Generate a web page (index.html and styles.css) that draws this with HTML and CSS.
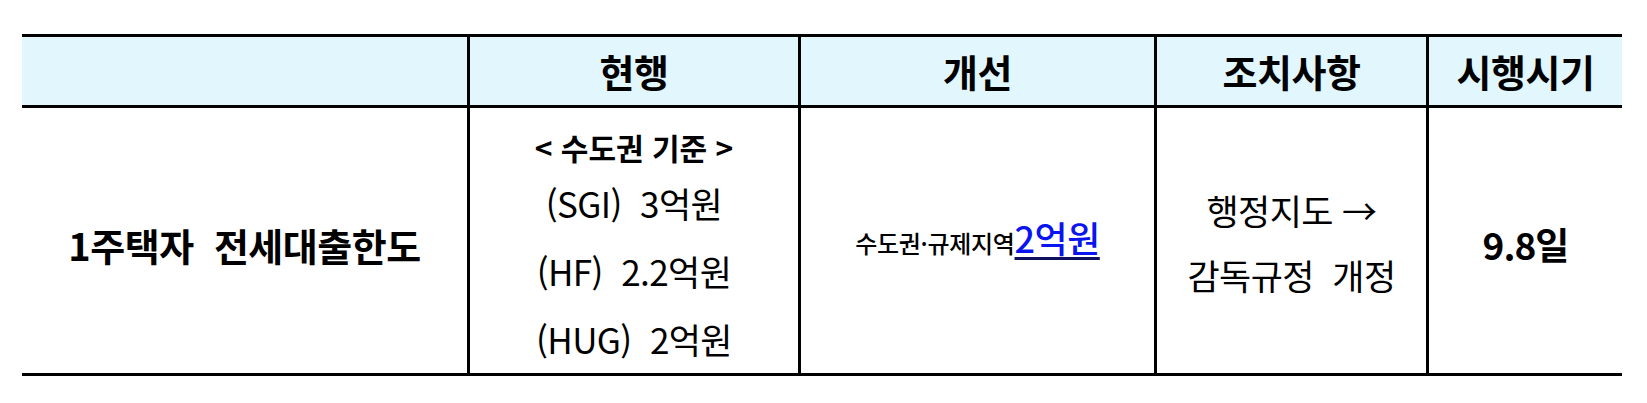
FILE: index.html
```html
<!DOCTYPE html>
<html lang="ko">
<head>
<meta charset="utf-8">
<title>1주택자 전세대출한도</title>
<link rel="stylesheet" href="styles.css">
</head>
<body>
<div class="table">
  <div class="row head">
    <div class="cell c1"></div>
    <div class="cell c2">현행</div>
    <div class="cell c3">개선</div>
    <div class="cell c4">조치사항</div>
    <div class="cell c5">시행시기</div>
  </div>
  <div class="row body">
    <div class="cell c1 item">1주택자&nbsp; 전세대출한도</div>
    <div class="cell c2 current">
      <div class="basis">&lt; 수도권 기준 &gt;</div>
      <div class="line">(SGI)&nbsp; 3억원</div>
      <div class="line">(HF)&nbsp; 2.2억원</div>
      <div class="line">(HUG)&nbsp; 2억원</div>
    </div>
    <div class="cell c3 improve">
      <div class="improve-text"><span class="region">수도권·규제지역</span><span class="amount">2억원</span></div>
    </div>
    <div class="cell c4 action">
      <div class="aline">행정지도 →</div>
      <div class="aline">감독규정&nbsp; 개정</div>
    </div>
    <div class="cell c5 date">9.8일</div>
  </div>
</div>
</body>
</html>
```

FILE: styles.css
```css
html, body {
  margin: 0;
  padding: 0;
  background: #ffffff;
}

body {
  font-family: "Noto Sans CJK KR", "Noto Sans", sans-serif;
  color: #000000;
}

.table {
  margin: 34px 0 0 22px;
  width: 1600px;
  border-top: 3px solid #000;
  border-bottom: 3px solid #000;
}

.row {
  display: grid;
  grid-template-columns: 445px 331px 356px 272px 196px;
}

.head {
  height: 68px;
  background: #e1f6fd;
  border-bottom: 3px solid #000;
}

.body {
  height: 265px;
}

.cell {
  display: flex;
  flex-direction: column;
  align-items: center;
  justify-content: center;
  box-sizing: border-box;
  border-left: 3px solid #000;
  text-align: center;
  white-space: nowrap;
}

.cell.c1 {
  border-left: none;
}

.head .cell {
  font-size: 38px;
  font-weight: 700;
  line-height: 68px;
  letter-spacing: -0.5px;
}

.item {
  font-size: 38px;
  font-weight: 700;
  letter-spacing: -0.5px;
  line-height: 44px;
  padding-top: 8px;
}

.current {
  justify-content: flex-start;
  padding-top: 17px;
}

.basis {
  font-size: 30px;
  font-weight: 700;
  line-height: 44px;
  letter-spacing: 0;
}

.line {
  font-size: 35px;
  font-weight: 400;
  line-height: 68px;
  letter-spacing: -0.6px;
}

.improve {
  padding-top: 2px;
}

.improve-text {
  line-height: 40px;
}

.region {
  font-size: 24px;
  font-weight: 500;
  letter-spacing: -0.3px;
}

.amount {
  font-size: 36px;
  font-weight: 500;
  color: #0a14f0;
  letter-spacing: -0.5px;
  text-decoration: underline;
  text-decoration-color: #101060;
  text-decoration-thickness: 3px;
  text-underline-offset: 4px;
}

.action {
  padding-top: 2px;
}

.aline {
  font-size: 35px;
  font-weight: 400;
  line-height: 65px;
  letter-spacing: -0.6px;
}

.date {
  font-size: 37px;
  font-weight: 700;
  letter-spacing: -1px;
  line-height: 44px;
  padding-top: 6px;
}
```
